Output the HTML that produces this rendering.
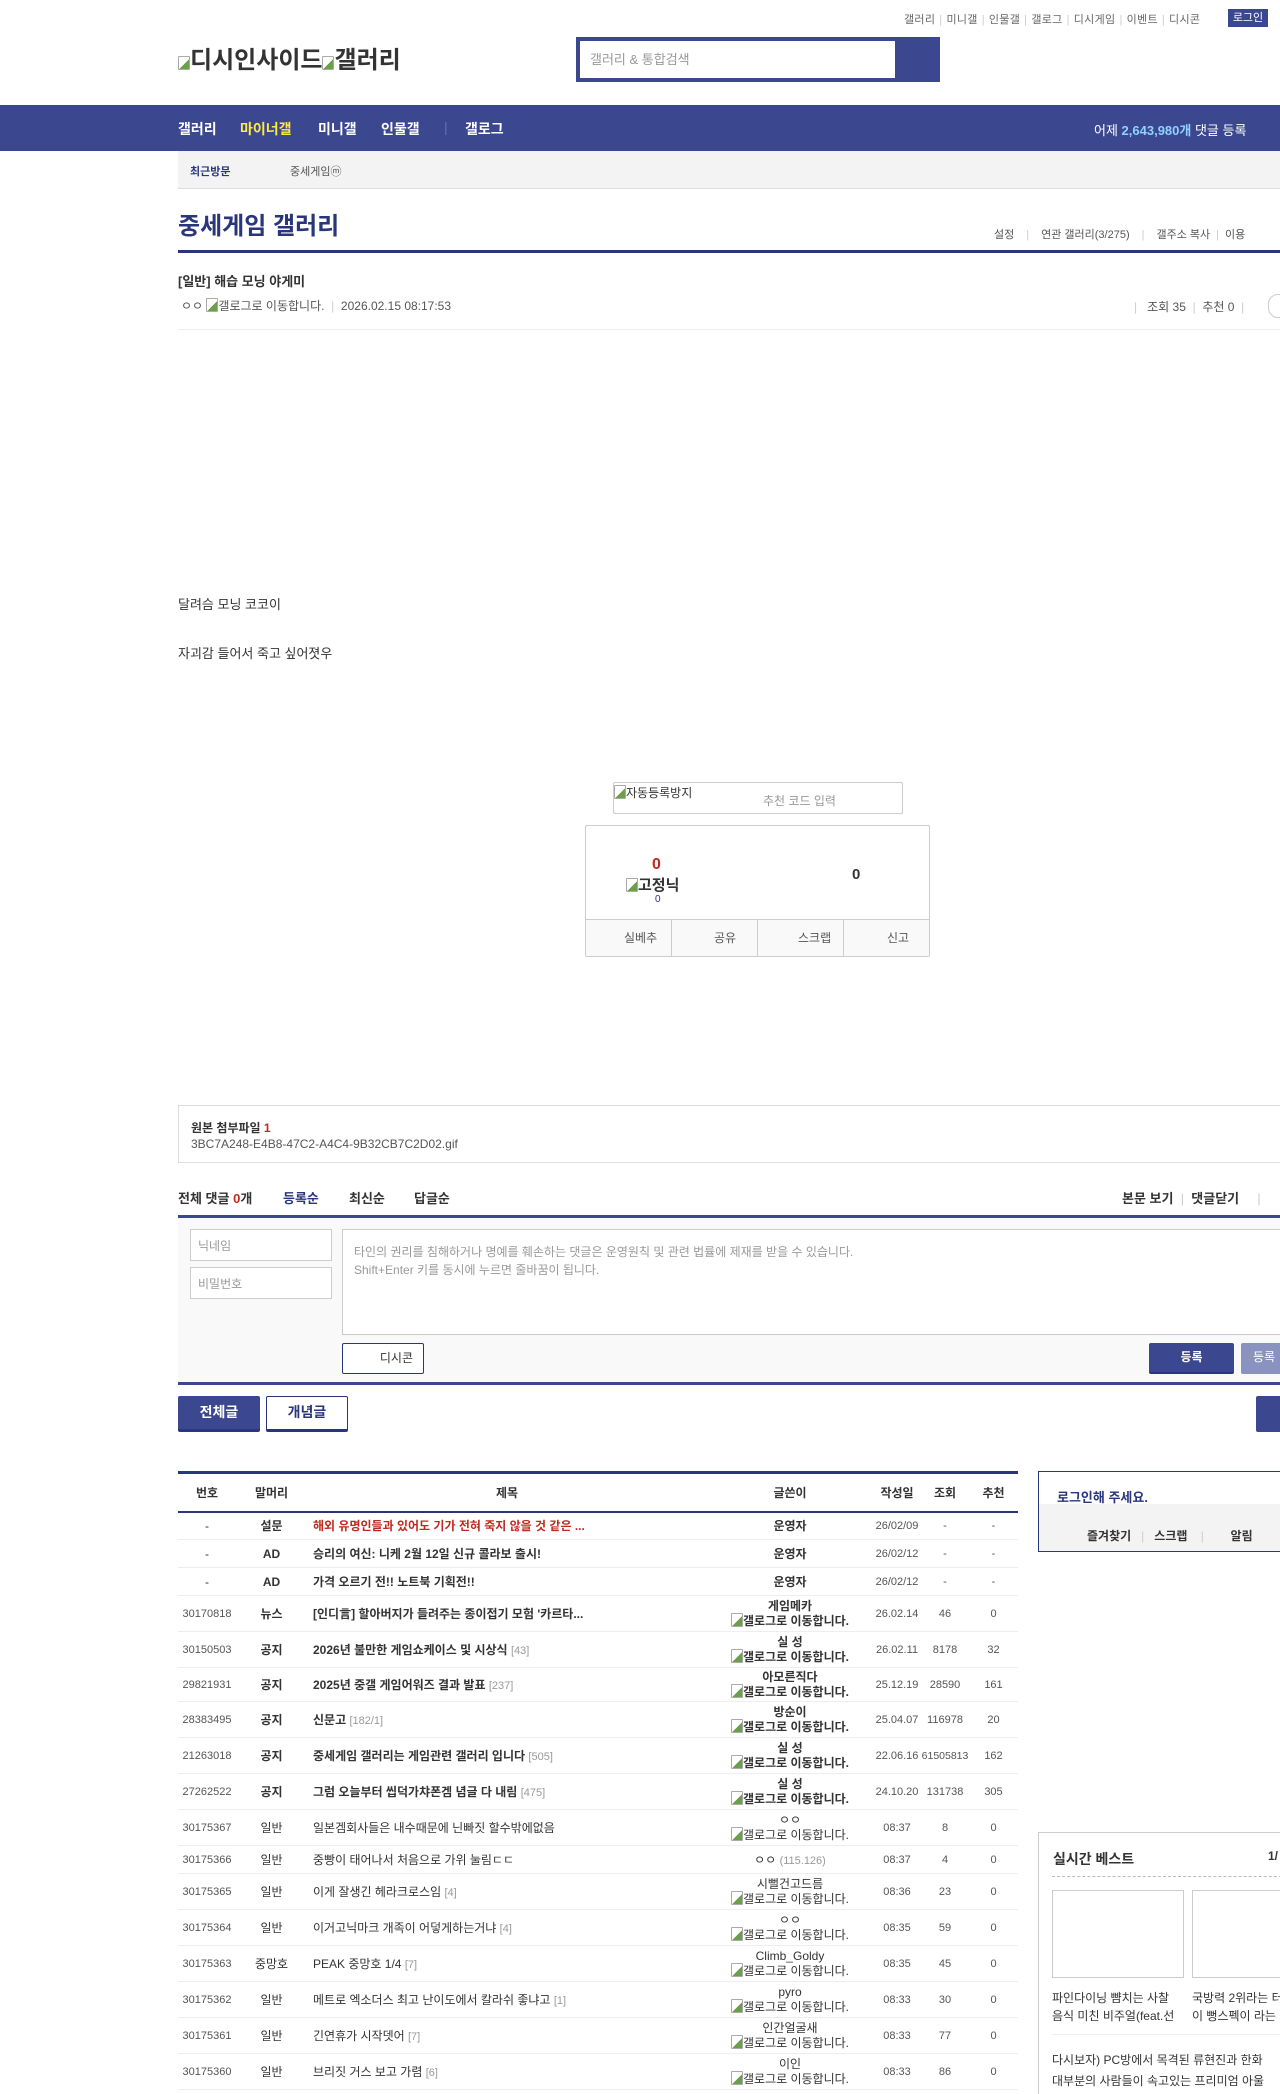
<!DOCTYPE html>
<html><head><meta charset="utf-8"><style>
*{margin:0;padding:0;box-sizing:border-box}
html,body{width:1280px;height:2094px;overflow:hidden;background:#fff}
body{font-family:"Liberation Sans","Noto Sans CJK KR",sans-serif;font-size:12px;color:#333;position:relative}
.a{position:absolute;white-space:nowrap}
.bi{display:inline-block;width:12px;height:14px;border:1px solid #aaa;border-radius:1px;vertical-align:-2px;background:linear-gradient(135deg,#fff 55%,#6b9f4a 56%)}
table{border-collapse:collapse;table-layout:fixed}
.tb{position:absolute;left:178px;top:1471px;width:840px;border-top:3px solid #29367c}
.tb td,.tb th{font-size:12px;text-align:center;border-bottom:1px solid #eee;white-space:nowrap;overflow:hidden}
.tb th{height:39px;font-weight:bold;border-bottom:2px solid #29367c;color:#333}
.tb td.t{text-align:left;padding-left:6px}
.tb td.n{font-size:11px;color:#555}
.tb .w{line-height:14px}
.rc{color:#999;font-size:11px}
.nv{position:absolute;top:119px;font-size:14px;font-weight:bold;color:#fff}
.sp{color:#ccc;margin:0 4px}
</style></head><body>

<!-- top links -->
<div class="a" style="left:904px;top:11px;font-size:11px;color:#666;letter-spacing:0.3px">갤러리<span class="sp">|</span>미니갤<span class="sp">|</span>인물갤<span class="sp">|</span>갤로그<span class="sp">|</span>디시게임<span class="sp">|</span>이벤트<span class="sp">|</span>디시콘</div>
<div class="a" style="left:1228px;top:9px;width:40px;height:18px;background:#3b4890;color:#fff;font-size:11px;text-align:center;line-height:18px">로그인</div>

<div class="a" style="left:178px;top:40px;font-size:24px;font-weight:bold;color:#333"><span class="bi"></span>디시인사이드<span class="bi"></span>갤러리</div>

<div class="a" style="left:576px;top:37px;width:364px;height:45px;background:#3b4890"></div>
<div class="a" style="left:580px;top:41px;width:315px;height:37px;background:#fff;color:#999;font-size:13px;line-height:37px;padding-left:10px">갤러리 &amp; 통합검색</div>

<!-- nav -->
<div class="a" style="left:0;top:105px;width:1280px;height:46px;background:#3b4890"></div>
<div class="nv" style="left:178px">갤러리</div>
<div class="nv" style="left:240px;color:#ffeb3b">마이너갤</div>
<div class="nv" style="left:318px">미니갤</div>
<div class="nv" style="left:381px">인물갤</div>
<div class="nv" style="left:444px;color:#6470b0;font-weight:normal">|</div>
<div class="nv" style="left:465px">갤로그</div>
<div class="a" style="left:1094px;top:120px;font-size:13px;color:#fff">어제 <b style="color:#8fd1ff">2,643,980개</b> 댓글 등록</div>

<div class="a" style="left:178px;top:151px;width:1102px;height:38px;background:#f3f3f3;border-bottom:1px solid #ddd"></div>
<div class="a" style="left:190px;top:163px;font-size:11px;font-weight:bold;color:#29367c">최근방문</div>
<div class="a" style="left:290px;top:163px;font-size:11px;color:#555">중세게임ⓜ</div>

<div class="a" style="left:178px;top:206px;font-size:24px;font-weight:bold;color:#29367c">중세게임 갤러리</div>
<div class="a" style="left:994px;top:226px;font-size:11px;color:#555">설정<span class="sp" style="margin:0 12px">|</span>연관 갤러리(3/275)<span class="sp" style="margin:0 12px">|</span>갤주소 복사<span class="sp" style="margin:0 6px">|</span>이용</div>
<div class="a" style="left:178px;top:250px;width:1102px;height:3px;background:#29367c"></div>

<div class="a" style="left:178px;top:271px;font-size:13px;font-weight:bold;color:#333">[일반] 해습 모닝 야게미</div>
<div class="a" style="left:181px;top:297px;font-size:12px;color:#555">ㅇㅇ <span class="bi"></span>갤로그로 이동합니다. <span style="color:#ccc">&nbsp;|&nbsp;</span> 2026.02.15 08:17:53</div>
<div class="a" style="left:1134px;top:298px;font-size:12px;color:#555"><span style="color:#ccc">|</span>&nbsp;&nbsp; 조회 35 <span style="color:#ccc">&nbsp;|&nbsp;</span> 추천 0 <span style="color:#ccc">&nbsp;|</span></div>
<div class="a" style="left:1268px;top:294px;width:20px;height:24px;border:1px solid #ccc;border-radius:12px"></div>
<div class="a" style="left:178px;top:329px;width:1102px;height:1px;background:#eee"></div>

<div class="a" style="left:178px;top:594px;font-size:13px;color:#333">달려슴 모닝 코코이</div>
<div class="a" style="left:178px;top:643px;font-size:13px;color:#333">자괴감 들어서 죽고 싶어졋우</div>

<!-- captcha -->
<div class="a" style="left:613px;top:782px;width:290px;height:32px;border:1px solid #ccc;border-radius:2px"></div>
<div class="a" style="left:614px;top:784px;font-size:12px;color:#333"><span class="bi"></span>자동등록방지</div>
<div class="a" style="left:763px;top:792px;font-size:12px;color:#999">추천 코드 입력</div>

<div class="a" style="left:585px;top:825px;width:345px;height:132px;border:1px solid #ccc;border-radius:2px"></div>
<div class="a" style="left:652px;top:856px;font-size:16px;font-weight:bold;color:#c0291e">0</div>
<div class="a" style="left:626px;top:874px;font-size:15px;font-weight:bold;color:#333"><span class="bi"></span>고정닉</div>
<div class="a" style="left:655px;top:894px;font-size:10px;color:#29367c">0</div>
<div class="a" style="left:852px;top:866px;font-size:15px;font-weight:bold;color:#333">0</div>
<div class="a" style="left:586px;top:919px;width:343px;height:37px;border-top:1px solid #ccc;background:#f9f9f9">
<div class="a" style="left:0;top:0;width:86px;height:36px;border-right:1px solid #ccc;line-height:36px;color:#555;padding-left:38px">실베추</div>
<div class="a" style="left:86px;top:0;width:86px;height:36px;border-right:1px solid #ccc;line-height:36px;color:#555;padding-left:42px">공유</div>
<div class="a" style="left:172px;top:0;width:86px;height:36px;border-right:1px solid #ccc;line-height:36px;color:#555;padding-left:40px">스크랩</div>
<div class="a" style="left:258px;top:0;width:85px;height:36px;line-height:36px;color:#555;padding-left:43px">신고</div></div>

<!-- attachment -->
<div class="a" style="left:178px;top:1105px;width:1110px;height:58px;border:1px solid #ddd"></div>
<div class="a" style="left:191px;top:1119px;font-size:12px;font-weight:bold;color:#333">원본 첨부파일 <span style="color:#c0291e">1</span></div>
<div class="a" style="left:191px;top:1137px;font-size:12px;color:#555">3BC7A248-E4B8-47C2-A4C4-9B32CB7C2D02.gif</div>

<!-- comments -->
<div class="a" style="left:178px;top:1188px;font-size:13px;font-weight:bold;color:#333">전체 댓글 <span style="color:#c0291e">0</span>개</div>
<div class="a" style="left:283px;top:1188px;font-size:13px;font-weight:bold;color:#29367c">등록순</div>
<div class="a" style="left:349px;top:1188px;font-size:13px;font-weight:bold;color:#333">최신순</div>
<div class="a" style="left:414px;top:1188px;font-size:13px;font-weight:bold;color:#333">답글순</div>
<div class="a" style="left:1122px;top:1188px;font-size:13px;font-weight:bold;color:#333">본문 보기 <span style="color:#ccc;font-weight:normal">&nbsp;|&nbsp;</span> 댓글닫기 <span style="color:#ccc;font-weight:normal">&nbsp;&nbsp;&nbsp;&nbsp;|</span></div>
<div class="a" style="left:178px;top:1215px;width:1102px;height:3px;background:#3b4890"></div>
<div class="a" style="left:178px;top:1218px;width:1102px;height:164px;background:#f9f9f9"></div>
<div class="a" style="left:190px;top:1229px;width:142px;height:32px;border:1px solid #ccc;background:#fff;color:#999;font-size:12px;padding:7px 7px">닉네임</div>
<div class="a" style="left:190px;top:1267px;width:142px;height:32px;border:1px solid #ccc;background:#fff;color:#999;font-size:12px;padding:7px 7px">비밀번호</div>
<div class="a" style="left:342px;top:1229px;width:950px;height:106px;border:1px solid #ccc;background:#fff;color:#999;font-size:12px;padding:13px 11px;line-height:18px">타인의 권리를 침해하거나 명예를 훼손하는 댓글은 운영원칙 및 관련 법률에 제재를 받을 수 있습니다.<br>Shift+Enter 키를 동시에 누르면 줄바꿈이 됩니다.</div>
<div class="a" style="left:342px;top:1343px;width:82px;height:31px;border:1px solid #29367c;border-radius:2px;background:#fff;text-align:right;padding-right:10px;line-height:29px;color:#333">디시콘</div>
<div class="a" style="left:1149px;top:1343px;width:85px;height:31px;background:#3b4890;border-bottom:2px solid #29367c;border-radius:2px;text-align:center;line-height:29px;color:#fff;font-weight:bold">등록</div>
<div class="a" style="left:1241px;top:1343px;width:60px;height:31px;background:#8a92c0;border-radius:2px;line-height:29px;color:#fff;padding-left:12px">등록</div>
<div class="a" style="left:178px;top:1382px;width:1102px;height:3px;background:#3b4890"></div>

<div class="a" style="left:178px;top:1396px;width:82px;height:36px;background:#3b4890;border-bottom:3px solid #29367c;border-radius:2px;color:#fff;font-weight:bold;font-size:14px;text-align:center;line-height:33px">전체글</div>
<div class="a" style="left:266px;top:1396px;width:82px;height:36px;background:#fff;border:1px solid #29367c;border-bottom:3px solid #29367c;border-radius:2px;color:#29367c;font-weight:bold;font-size:14px;text-align:center;line-height:31px">개념글</div>
<div class="a" style="left:1256px;top:1396px;width:40px;height:36px;background:#3b4890;border-radius:2px"></div>

<!-- table -->
<table class="tb">
<colgroup><col style="width:58px"><col style="width:71px"><col style="width:400px"><col style="width:166px"><col style="width:48px"><col style="width:48px"><col style="width:49px"></colgroup>
<tr><th>번호</th><th>말머리</th><th>제목</th><th>글쓴이</th><th>작성일</th><th>조회</th><th>추천</th></tr>
<tr style="height:28px"><td>-</td><td><b>설문</b></td><td class="t"><b style="color:#c0291e">해외 유명인들과 있어도 기가 전혀 죽지 않을 것 같은 ...</b></td><td><b>운영자</b></td><td class="n">26/02/09</td><td class="n">-</td><td class="n">-</td></tr>
<tr style="height:28px"><td>-</td><td><b>AD</b></td><td class="t"><b>승리의 여신: 니케 2월 12일 신규 콜라보 출시!</b></td><td><b>운영자</b></td><td class="n">26/02/12</td><td class="n">-</td><td class="n">-</td></tr>
<tr style="height:28px"><td>-</td><td><b>AD</b></td><td class="t"><b>가격 오르기 전!! 노트북 기획전!!</b></td><td><b>운영자</b></td><td class="n">26/02/12</td><td class="n">-</td><td class="n">-</td></tr>
<tr style="height:36px"><td class="n">30170818</td><td><b>뉴스</b></td><td class="t"><b>[인디言] 할아버지가 들려주는 종이접기 모험 '카르타...</b></td><td class="w"><b>게임메카<br><span class="bi"></span>갤로그로 이동합니다.</b></td><td class="n">26.02.14</td><td class="n">46</td><td class="n">0</td></tr>
<tr style="height:36px"><td class="n">30150503</td><td><b>공지</b></td><td class="t"><b>2026년 불만한 게임쇼케이스 및 시상식</b> <span class="rc">[43]</span></td><td class="w"><b>실 성<br><span class="bi"></span>갤로그로 이동합니다.</b></td><td class="n">26.02.11</td><td class="n">8178</td><td class="n">32</td></tr>
<tr style="height:34px"><td class="n">29821931</td><td><b>공지</b></td><td class="t"><b>2025년 중갤 게임어워즈 결과 발표</b> <span class="rc">[237]</span></td><td class="w"><b>아모른직다<br><span class="bi"></span>갤로그로 이동합니다.</b></td><td class="n">25.12.19</td><td class="n">28590</td><td class="n">161</td></tr>
<tr style="height:36px"><td class="n">28383495</td><td><b>공지</b></td><td class="t"><b>신문고</b> <span class="rc">[182/1]</span></td><td class="w"><b>방순이<br><span class="bi"></span>갤로그로 이동합니다.</b></td><td class="n">25.04.07</td><td class="n">116978</td><td class="n">20</td></tr>
<tr style="height:36px"><td class="n">21263018</td><td><b>공지</b></td><td class="t"><b>중세게임 갤러리는 게임관련 갤러리 입니다</b> <span class="rc">[505]</span></td><td class="w"><b>실 성<br><span class="bi"></span>갤로그로 이동합니다.</b></td><td class="n">22.06.16</td><td class="n" style="font-size:10.5px">61505813</td><td class="n">162</td></tr>
<tr style="height:36px"><td class="n">27262522</td><td><b>공지</b></td><td class="t"><b>그럼 오늘부터 씹덕가챠폰겜 념글 다 내림</b> <span class="rc">[475]</span></td><td class="w"><b>실 성<br><span class="bi"></span>갤로그로 이동합니다.</b></td><td class="n">24.10.20</td><td class="n">131738</td><td class="n">305</td></tr>
<tr style="height:36px"><td class="n">30175367</td><td>일반</td><td class="t">일본겜회사들은 내수때문에 닌빠짓 할수밖에없음</td><td class="w">ㅇㅇ<br><span class="bi"></span>갤로그로 이동합니다.</td><td class="n">08:37</td><td class="n">8</td><td class="n">0</td></tr>
<tr style="height:28px"><td class="n">30175366</td><td>일반</td><td class="t">중빵이 태어나서 처음으로 가위 눌림ㄷㄷ</td><td>ㅇㅇ <span class="rc">(115.126)</span></td><td class="n">08:37</td><td class="n">4</td><td class="n">0</td></tr>
<tr style="height:36px"><td class="n">30175365</td><td>일반</td><td class="t">이게 잘생긴 헤라크로스임 <span class="rc">[4]</span></td><td class="w">시뻘건고드름<br><span class="bi"></span>갤로그로 이동합니다.</td><td class="n">08:36</td><td class="n">23</td><td class="n">0</td></tr>
<tr style="height:36px"><td class="n">30175364</td><td>일반</td><td class="t">이거고닉마크 개족이 어덯게하는거냐 <span class="rc">[4]</span></td><td class="w">ㅇㅇ<br><span class="bi"></span>갤로그로 이동합니다.</td><td class="n">08:35</td><td class="n">59</td><td class="n">0</td></tr>
<tr style="height:36px"><td class="n">30175363</td><td>중망호</td><td class="t">PEAK 중망호 1/4 <span class="rc">[7]</span></td><td class="w">Climb_Goldy<br><span class="bi"></span>갤로그로 이동합니다.</td><td class="n">08:35</td><td class="n">45</td><td class="n">0</td></tr>
<tr style="height:36px"><td class="n">30175362</td><td>일반</td><td class="t">메트로 엑소더스 최고 난이도에서 칼라쉬 좋냐고 <span class="rc">[1]</span></td><td class="w">pyro<br><span class="bi"></span>갤로그로 이동합니다.</td><td class="n">08:33</td><td class="n">30</td><td class="n">0</td></tr>
<tr style="height:36px"><td class="n">30175361</td><td>일반</td><td class="t">긴연휴가 시작뎃어 <span class="rc">[7]</span></td><td class="w">인간얼굴새<br><span class="bi"></span>갤로그로 이동합니다.</td><td class="n">08:33</td><td class="n">77</td><td class="n">0</td></tr>
<tr style="height:36px"><td class="n">30175360</td><td>일반</td><td class="t">브리짓 거스 보고 가렴 <span class="rc">[6]</span></td><td class="w">이인<br><span class="bi"></span>갤로그로 이동합니다.</td><td class="n">08:33</td><td class="n">86</td><td class="n">0</td></tr>
</table>

<!-- sidebar -->
<div class="a" style="left:1038px;top:1471px;width:260px;height:81px;border:1px solid #29367c"></div>
<div class="a" style="left:1039px;top:1504px;width:250px;height:47px;background:#f3f3f3"></div>
<div class="a" style="left:1057px;top:1487px;font-size:13px;font-weight:bold;color:#29367c">로그인해 주세요.</div>
<div class="a" style="left:1087px;top:1527px;font-size:12px;font-weight:bold;color:#333">즐겨찾기 <span style="color:#ccc;font-weight:normal">&nbsp;&nbsp;|&nbsp;&nbsp;</span> 스크랩 <span style="color:#ccc;font-weight:normal">&nbsp;&nbsp;&nbsp;|&nbsp;&nbsp;&nbsp;&nbsp;&nbsp;&nbsp;&nbsp;</span> 알림</div>

<div class="a" style="left:1038px;top:1832px;width:260px;height:270px;border:1px solid #ccc"></div>
<div class="a" style="left:1053px;top:1849px;font-size:14px;font-weight:bold;color:#333">실시간 베스트</div>
<div class="a" style="left:1268px;top:1849px;font-size:12px;font-weight:bold;color:#333">1/</div>
<div class="a" style="left:1052px;top:1876px;width:240px;border-top:1px dashed #bbb"></div>
<div class="a" style="left:1052px;top:1890px;width:132px;height:88px;border:1px solid #ccc"></div>
<div class="a" style="left:1192px;top:1890px;width:132px;height:88px;border:1px solid #ccc"></div>
<div class="a" style="left:1052px;top:1989px;font-size:12px;color:#333;line-height:18px">파인다이닝 뺨치는 사찰<br>음식 미친 비주얼(feat.선</div>
<div class="a" style="left:1192px;top:1989px;font-size:12px;color:#333;line-height:18px">국방력 2위라는 터<br>이 뻥스펙이 라는</div>
<div class="a" style="left:1052px;top:2034px;width:240px;border-top:1px solid #eee"></div>
<div class="a" style="left:1052px;top:2050px;font-size:12px;color:#333;line-height:21px">다시보자) PC방에서 목격된 류현진과 한화<br>대부분의 사람들이 속고있는 프리미엄 아울</div>

</body></html>
